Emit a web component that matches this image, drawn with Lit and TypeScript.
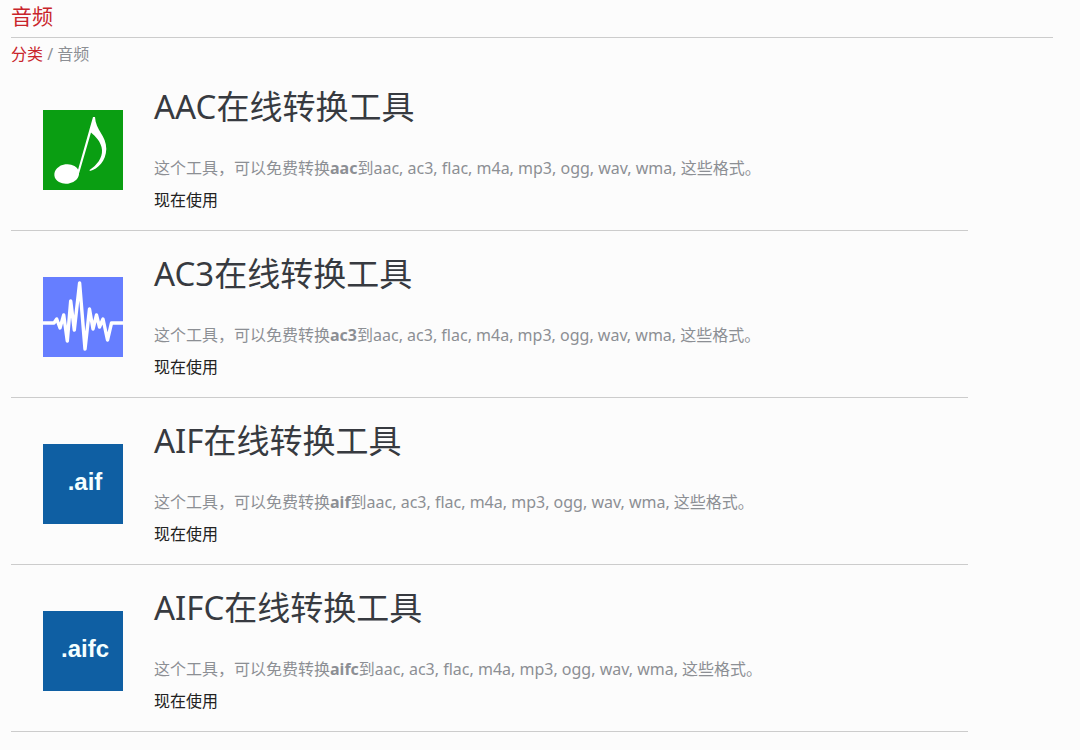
import { LitElement, html, css, svg } from 'lit';
import { customElement } from 'lit/decorators.js';

interface Tool {
  name: string;
  icon: unknown;
}

const label = (text: string) => svg`
  <rect width="80" height="80" fill="#0f5fa3"></rect>
  <text x="42" y="46" text-anchor="middle" class="ext">${text}</text>`;

const tools: Tool[] = [
  {
    name: 'aac',
    icon: svg`
      <rect width="80" height="80" fill="#0a9e12"></rect>
      <ellipse cx="23.7" cy="64" rx="12.4" ry="9.8" transform="rotate(-8 23.7 64)" fill="#fff"></ellipse>
      <path d="M34.4 62 L50 7 H52 C52.5 20 63.5 26 63.3 39 C63 51 55 59 46.8 61 L46.6 60 C54 55 59.5 48 59 40 C58.5 32 52 26 48 22.5 L36.2 63 Z" fill="#fff"></path>`,
  },
  {
    name: 'ac3',
    icon: svg`
      <rect width="80" height="80" fill="#667eff"></rect>
      <path d="M0 46 H11 L13.7 42 L17 51 L20.7 38 L24.3 64 L27.7 24 L31.3 53 L36.6 6 L42 72 L46.5 32 L50 52 L53.5 38 L56.5 50 L60 42 L64.5 63 L68.5 46 H80" fill="none" stroke="#fff" stroke-width="3.4" stroke-linejoin="round"></path>`,
  },
  { name: 'aif', icon: label('.aif') },
  { name: 'aifc', icon: label('.aifc') },
];

@customElement('app-root')
export class AppRoot extends LitElement {
  static styles = css`
    :host {
      display: block;
      min-height: 100vh;
      background: #fcfcfc;
      color: #8c8f94;
      font: 16px/32px 'Noto Sans', 'Noto Sans CJK SC', sans-serif;
    }
    main { padding: 0 27px 0 11px; }
    h1 {
      margin: 0;
      padding-bottom: 4px;
      border-bottom: 1px solid #ccc;
      color: #c9252b;
      font-size: 21px;
      font-weight: 400;
      line-height: 33px;
    }
    nav { padding-top: 6px; line-height: 20px; }
    a { color: #222; text-decoration: none; }
    nav a { color: #c9252b; }
    ul { list-style: none; margin: 0 85px 0 0; padding: 0; }
    li {
      display: flex;
      align-items: flex-start;
      gap: 31px;
      padding: 23px 0 14px 32px;
      border-bottom: 1px solid #ccc;
    }
    .icon { width: 80px; height: 80px; flex: none; margin-top: 23px; }
    .ext { fill: #f4ffff; font: 700 24px 'Liberation Sans', sans-serif; }
    h2 { margin: 0 0 25px; color: #373a40; font-size: 33px; font-weight: 400; line-height: 40px; }
    p { margin: 0; }
  `;

  render() {
    return html`<main>
      <h1>音频</h1>
      <nav aria-label="分类"><a href="#">分类</a> / 音频</nav>
      <ul>
        ${tools.map(
          (tool) => html`<li>
            <svg class="icon" viewBox="0 0 80 80" aria-hidden="true">${tool.icon}</svg>
            <div>
              <h2>${tool.name.toUpperCase()}在线转换工具</h2>
              <p>这个工具，可以免费转换<b>${tool.name}</b>到aac, ac3, flac, m4a, mp3, ogg, wav, wma, 这些格式。</p>
              <p><a href="#">现在使用</a></p>
            </div>
          </li>`
        )}
      </ul>
    </main>`;
  }
}
